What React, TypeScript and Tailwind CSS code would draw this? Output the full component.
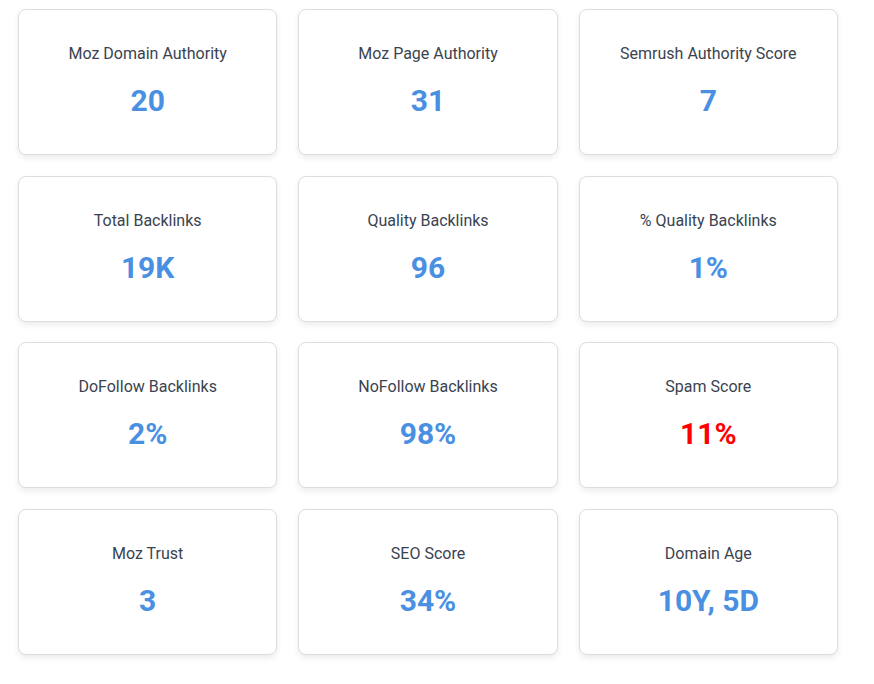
const METRICS = [
  { label: 'Moz Domain Authority', value: '20' },
  { label: 'Moz Page Authority', value: '31' },
  { label: 'Semrush Authority Score', value: '7' },
  { label: 'Total Backlinks', value: '19K' },
  { label: 'Quality Backlinks', value: '96' },
  { label: '% Quality Backlinks', value: '1%' },
  { label: 'DoFollow Backlinks', value: '2%' },
  { label: 'NoFollow Backlinks', value: '98%' },
  { label: 'Spam Score', value: '11%', danger: true },
  { label: 'Moz Trust', value: '3' },
  { label: 'SEO Score', value: '34%' },
  { label: 'Domain Age', value: '10Y, 5D' },
];

export default function App() {
  return (
    <div
      className="min-h-screen bg-white pl-[18px] pt-[9px]"
      style={{ fontFamily: 'Roboto, "Liberation Sans", sans-serif' }}
    >
      <div className="grid w-[820px] grid-cols-3 gap-x-[21px] gap-y-[20.7px]">
        {METRICS.map((m) => (
          <div
            key={m.label}
            className="flex h-[146px] flex-col items-center rounded-lg border border-[#dddddd] bg-white pt-8 shadow-[0_3px_6px_rgba(0,0,0,0.08)]"
          >
            <p className="text-base leading-6 text-[#3a4350]">{m.label}</p>
            <p
              className={
                m.danger
                  ? 'mt-[15px] text-[30px] font-bold leading-10 text-[#ff0000]'
                  : 'mt-[15px] text-[30px] font-bold leading-10 text-[#4a90e2]'
              }
            >
              {m.value}
            </p>
          </div>
        ))}
      </div>
    </div>
  );
}
